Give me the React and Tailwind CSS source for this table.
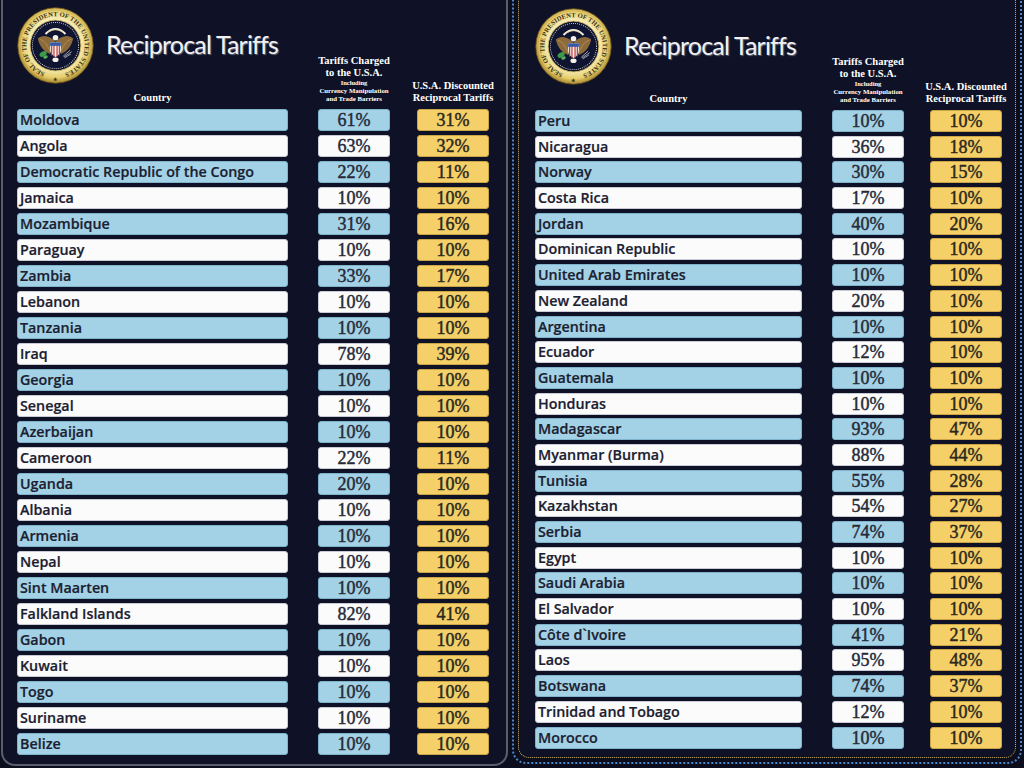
import React from "react";

const LEFT = [
  ["Moldova", 61, 31],
  ["Angola", 63, 32],
  ["Democratic Republic of the Congo", 22, 11],
  ["Jamaica", 10, 10],
  ["Mozambique", 31, 16],
  ["Paraguay", 10, 10],
  ["Zambia", 33, 17],
  ["Lebanon", 10, 10],
  ["Tanzania", 10, 10],
  ["Iraq", 78, 39],
  ["Georgia", 10, 10],
  ["Senegal", 10, 10],
  ["Azerbaijan", 10, 10],
  ["Cameroon", 22, 11],
  ["Uganda", 20, 10],
  ["Albania", 10, 10],
  ["Armenia", 10, 10],
  ["Nepal", 10, 10],
  ["Sint Maarten", 10, 10],
  ["Falkland Islands", 82, 41],
  ["Gabon", 10, 10],
  ["Kuwait", 10, 10],
  ["Togo", 10, 10],
  ["Suriname", 10, 10],
  ["Belize", 10, 10],
];

const RIGHT = [
  ["Peru", 10, 10],
  ["Nicaragua", 36, 18],
  ["Norway", 30, 15],
  ["Costa Rica", 17, 10],
  ["Jordan", 40, 20],
  ["Dominican Republic", 10, 10],
  ["United Arab Emirates", 10, 10],
  ["New Zealand", 20, 10],
  ["Argentina", 10, 10],
  ["Ecuador", 12, 10],
  ["Guatemala", 10, 10],
  ["Honduras", 10, 10],
  ["Madagascar", 93, 47],
  ["Myanmar (Burma)", 88, 44],
  ["Tunisia", 55, 28],
  ["Kazakhstan", 54, 27],
  ["Serbia", 74, 37],
  ["Egypt", 10, 10],
  ["Saudi Arabia", 10, 10],
  ["El Salvador", 10, 10],
  ["Côte d`Ivoire", 41, 21],
  ["Laos", 95, 48],
  ["Botswana", 74, 37],
  ["Trinidad and Tobago", 12, 10],
  ["Morocco", 10, 10],
];

function Seal({ id }) {
  return (
    <svg width="77" height="77" viewBox="0 0 100 100">
      <defs>
        <radialGradient id={`sg${id}`} cx="50%" cy="48%" r="52%">
          <stop offset="62%" stopColor="#f7efbd" />
          <stop offset="86%" stopColor="#e6cd6c" />
          <stop offset="100%" stopColor="#a2842c" />
        </radialGradient>
        <path
          id={`tp${id}`}
          d="M 50 88 a 38 38 0 1 1 0 -76 a 38 38 0 1 1 0 76"
        />
      </defs>
      <circle cx="50" cy="50" r="49" fill={`url(#sg${id})`} stroke="#6e5618" strokeWidth="1" />
      <circle cx="50" cy="50" r="46" fill="none" stroke="#c2a448" strokeWidth="0.6" />
      <text
        fontSize="8.6"
        fontFamily="'Liberation Serif', serif"
        fontWeight="bold"
        fill="#3b3314"
      >
        <textPath href={`#tp${id}`} startOffset="14" textLength="212" lengthAdjust="spacing">
          SEAL OF THE PRESIDENT OF THE UNITED STATES
        </textPath>
      </text>
      <text x="50" y="96" fontSize="6" textAnchor="middle" fill="#3b3314">★</text>
      <circle cx="50" cy="50" r="33" fill="#0f1430" stroke="#d8bf68" strokeWidth="1.2" />
      <circle
        cx="50"
        cy="50"
        r="30"
        fill="none"
        stroke="#e9e6da"
        strokeWidth="1.3"
        strokeDasharray="0.1 2.6"
        strokeLinecap="round"
      />
      <path d="M 37 35 Q 50 22 63 35" stroke="#f2f0e6" strokeWidth="2.6" fill="none" />
      <path d="M 40 33 Q 50 26 60 33" stroke="#d8c070" strokeWidth="0.8" fill="none" />
      <path d="M 50 45 C 43 37, 33 35, 27 41 C 29 50, 34 58, 43 61 Z" fill="#8d6a3a" />
      <path d="M 50 45 C 57 37, 67 35, 73 41 C 71 50, 66 58, 57 61 Z" fill="#8d6a3a" />
      <path d="M 30 42 C 36 44, 40 50, 43 58" stroke="#c8a86a" strokeWidth="0.7" fill="none" />
      <path d="M 70 42 C 64 44, 60 50, 57 58" stroke="#c8a86a" strokeWidth="0.7" fill="none" />
      <circle cx="50" cy="40" r="3.6" fill="#f3f1ea" />
      <path d="M 43 46 H 57 V 55 Q 57 62 50 65 Q 43 62 43 55 Z" fill="#f3f1ea" />
      <path d="M 45 50 V 63 M 48 50 V 64.5 M 52 50 V 64.5 M 55 50 V 63" stroke="#c4343c" strokeWidth="1.5" />
      <rect x="43" y="46" width="14" height="4.5" fill="#3658a8" />
      <ellipse cx="34" cy="61" rx="5" ry="3.2" transform="rotate(-30 34 61)" fill="#3f9a48" />
      <ellipse cx="37" cy="65" rx="3" ry="2" transform="rotate(-20 37 65)" fill="#56b060" />
      <path d="M 60 64 L 69 56 M 61 65 L 71 58 M 62 66 L 70 61" stroke="#b8b8c0" strokeWidth="1.1" />
      <ellipse cx="50" cy="68.5" rx="4" ry="3" fill="#f3f1ea" />
    </svg>
  );
}

function Header({ countryW, g1, g2, sealGap }) {
  return (
    <div className="flex h-[105px] items-end text-white [font-family:'Liberation_Serif',serif] font-bold">
      <div className={`${countryW} flex h-full flex-col`}>
        <div className={`mt-[5px] flex items-center ${sealGap}`}>
          <Seal id={countryW} />
          <span className="-mt-[3px] text-[25px] font-normal leading-none tracking-[-0.8px] text-[#f1f1f3] [font-family:Lato,sans-serif] [text-shadow:1px_1px_1px_#6b6b78]">
            Reciprocal Tariffs
          </span>
        </div>
        <div className="mt-auto pb-[3px] text-center text-[10.5px] leading-[12px]">Country</div>
      </div>
      <div className={`${g1} w-[72px] pb-[4px] text-center`}>
        <div className="whitespace-nowrap text-[10.5px] leading-[12px]">Tariffs Charged</div>
        <div className="whitespace-nowrap text-[10.5px] leading-[12px]">to the U.S.A.</div>
        <div className="whitespace-nowrap text-[6.5px] leading-[8px]">Including</div>
        <div className="-mx-2 whitespace-nowrap text-[6.8px] leading-[8px]">Currency Manipulation</div>
        <div className="whitespace-nowrap text-[6.8px] leading-[8px]">and Trade Barriers</div>
      </div>
      <div className={`${g2} w-[72px] pb-[3px] text-center`}>
        <div className="-mx-3 whitespace-nowrap text-[10.5px] leading-[12px]">U.S.A. Discounted</div>
        <div className="-mx-3 whitespace-nowrap text-[10.5px] leading-[12px]">Reciprocal Tariffs</div>
      </div>
    </div>
  );
}

function Rows({ data, countryW, g1, g2, gap, mt }) {
  return (
    <div className={`flex flex-col ${gap} ${mt}`}>
      {data.map(([name, a, b], i) => {
        const blue = i % 2 === 0;
        const cell = blue
          ? "bg-[#a3d2e6] border-[#7fb3cc]"
          : "bg-[#fbfbfb] border-[#c9ccd4]";
        return (
          <div key={name} className="flex h-[22px]">
            <div
              className={`${countryW} ${cell} flex items-end overflow-hidden rounded-[3px] border pb-[1px] pl-[2px] text-[14.3px] leading-[18px] font-semibold text-[#1b2030] [font-family:'Open_Sans',sans-serif] whitespace-nowrap [-webkit-text-stroke:0.2px_#1b2030]`}
            >
              {name}
            </div>
            <div
              className={`${g1} ${cell} flex w-[72px] items-end justify-center rounded-[3px] border text-[18px] leading-[20px] text-[#262a38] [font-family:'Liberation_Serif',serif] [-webkit-text-stroke:0.45px_#262a38]`}
            >
              {a}%
            </div>
            <div
              className={`${g2} flex w-[72px] items-end justify-center rounded-[3px] border border-[#c9a545] bg-[#f5cf68] text-[18px] leading-[20px] text-[#2a281f] [font-family:'Liberation_Serif',serif] [-webkit-text-stroke:0.45px_#2a281f]`}
            >
              {b}%
            </div>
          </div>
        );
      })}
    </div>
  );
}

export default function App() {
  return (
    <div className="flex h-[768px] w-[1024px] overflow-hidden bg-[#0c0e1d]">
      <div className="ml-[1px] mt-[-4px] h-[770px] w-[507px] shrink-0 rounded-b-[14px] border-2 border-[#5a5e6c] bg-[#0f1226] pl-[14px] pt-[4px]">
        <Header countryW="w-[271px]" g1="ml-[30px]" g2="ml-[27px]" sealGap="gap-[12px]" />
        <Rows data={LEFT} countryW="w-[271px]" g1="ml-[30px]" g2="ml-[27px]" gap="gap-[4px]" mt="mt-[2px]" />
      </div>
      <div className="ml-[4px] mt-[-4px] h-[768px] w-[510px] shrink-0 rounded-b-[14px] border-2 border-dotted border-[#4d86c8]">
        <div className="mx-[4px] h-[760px] rounded-b-[11px] border border-dotted border-[#cfae55] bg-[#0f1226] pl-[16px] pt-[4px]">
          <Header countryW="w-[267px]" g1="ml-[30px]" g2="ml-[26px]" sealGap="gap-[12px]" />
          <Rows data={RIGHT} countryW="w-[267px]" g1="ml-[30px]" g2="ml-[26px]" gap="gap-[3.7px]" mt="mt-[2px]" />
        </div>
      </div>
    </div>
  );
}
